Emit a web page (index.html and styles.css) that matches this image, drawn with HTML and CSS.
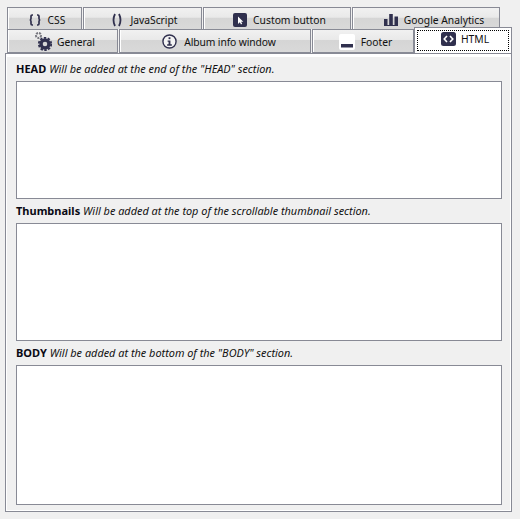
FILE: index.html
```html
<!DOCTYPE html>
<html lang="en">
<head>
    <meta charset="UTF-8">
    <title>Custom code</title>
    <link rel="stylesheet" href="styles.css">
</head>
<body>
    <div class="tabs">
        <div class="tab-row row-top">
            <div class="tab tab-css">
                <svg class="icon" width="12" height="12" viewBox="0 0 12 12"><path d="M4 1H3.200Q2 1 2 2.200V4.500Q2 6 .7 6Q2 6 2 7.500V9.800Q2 11 3.200 11H4M8 1H8.800Q10 1 10 2.200V4.500Q10 6 11.300 6Q10 6 10 7.500V9.800Q10 11 8.800 11H8" fill="none" stroke="#30304e" stroke-width="1.700"/></svg>
                <span>CSS</span>
            </div>
            <div class="tab tab-js">
                <svg class="icon" width="10" height="14" viewBox="0 0 10 14"><path d="M3 1Q0 7 3 13M7 1Q10 7 7 13" fill="none" stroke="#30304e" stroke-width="1.800"/></svg>
                <span>JavaScript</span>
            </div>
            <div class="tab">
                <svg class="icon" width="14" height="14" viewBox="0 0 14 14"><rect width="14" height="14" rx="2" fill="#30304e"/><path d="M5 3.500V11L6.800 9.300L8 11.500L9.200 10.800L8.100 8.700H10.300Z" fill="#fff"/></svg>
                <span>Custom button</span>
            </div>
            <div class="tab tab-analytics">
                <svg class="icon" width="14" height="12" viewBox="0 0 14 12"><path d="M0 5H3.500V11H0ZM5.200 0H8.800V11H5.200ZM10.500 2.500H14V11H10.500Z" fill="#30304e"/><rect y="11" width="14" height="1" fill="#30304e"/></svg>
                <span>Google Analytics</span>
            </div>
        </div>
        <div class="tab-row row-bottom">
            <div class="tab tab-general">
                <svg class="icon" width="17" height="19" viewBox="0 0 17 19"><circle cx="3.500" cy="3.500" r="2.500" fill="none" stroke="#77777f" stroke-width="2" stroke-dasharray="2 1"/><circle cx="10" cy="12" r="4" fill="none" stroke="#30304e" stroke-width="3.400"/><circle cx="10" cy="12" r="6.200" fill="none" stroke="#30304e" stroke-width="1.800" stroke-dasharray="2.400 1.500"/></svg>
                <span>General</span>
            </div>
            <div class="tab tab-album">
                <svg class="icon" width="15" height="15" viewBox="0 0 16 16"><circle cx="8" cy="8" r="7" fill="#f4f4f4" stroke="#30304e" stroke-width="1.500"/><rect x="7" y="3.500" width="2" height="2" fill="#30304e"/><path d="M6 7H9V11H10.500V12.500H5.500V11H7V8.300H6Z" fill="#30304e"/></svg>
                <span>Album info window</span>
            </div>
            <div class="tab">
                <svg class="icon" width="16" height="16" viewBox="0 0 16 16"><rect width="16" height="16" rx="2" fill="#fff"/><rect x="2" y="10" width="12" height="3.500" fill="#30304e"/></svg>
                <span>Footer</span>
            </div>
            <div class="tab tab-active">
                <div class="focus-box">
                    <svg class="icon" width="15" height="14" viewBox="0 0 15 14"><rect width="15" height="14" rx="2.500" fill="#30304e"/><path d="M6 4L3.200 7L6 10M9 4L11.800 7L9 10" fill="none" stroke="#fff" stroke-width="1.600"/></svg>
                    <span>HTML</span>
                </div>
            </div>
        </div>
    </div>

    <div class="panel">
        <div class="field">
            <p class="field-label"><b>HEAD</b> <i>Will be added at the end of the "HEAD" section.</i></p>
            <div class="code-box box-small"></div>
        </div>
        <div class="field">
            <p class="field-label"><b>Thumbnails</b> <i>Will be added at the top of the scrollable thumbnail section.</i></p>
            <div class="code-box box-small"></div>
        </div>
        <div class="field">
            <p class="field-label"><b>BODY</b> <i>Will be added at the bottom of the "BODY" section.</i></p>
            <div class="code-box box-large"></div>
        </div>
    </div>
</body>
</html>
```

FILE: styles.css
```css
body {
    margin: 0;
    background: #f0f0f0;
    font-family: "Noto Sans", "Liberation Sans", sans-serif;
    font-size: 11px;
    color: #111;
}
.tabs {
    padding: 7px 0 0 7px;
}
.tab-row {
    display: grid;
}
.row-top {
    grid-template-columns: 76px 120px 149px 148px;
    width: 493px;
    height: 22px;
}
.row-bottom {
    grid-template-columns: 112px 193px 103px 97px;
    width: 505px;
    height: 24px;
}
.tab {
    display: flex;
    align-items: center;
    justify-content: center;
    gap: 6px;
    box-sizing: border-box;
    padding-left: 5px;
    border: 1px solid #888a95;
    border-bottom: none;
    margin-right: 1px;
    box-shadow: inset 1px 0 #fff;
    background: linear-gradient(#f1f1f1 0, #e9e9e9 45%, #d5d5d5 46%, #d9d9d9 100%);
    font-size: 10.3px;
}
.row-top .tab {
    padding-top: 2px;
}
.row-top .tab:last-child {
    margin-right: 0;
}
.row-bottom .tab {
    padding-top: 1px;
    border-bottom: 1px solid #888a95;
}
.tab-css {
    gap: 7px;
}
.tab-js {
    gap: 8px;
}
.row-top .tab-analytics {
    padding-left: 16px;
}
.tab-general {
    gap: 5px;
}
.tab-album {
    gap: 7px;
    padding-left: 8px;
    letter-spacing: -0.1px;
}
.row-bottom .tab-active {
    margin: -2px 0 0 -1px;
    padding: 2px;
    position: relative;
    background: #fff;
    box-shadow: none;
    border-bottom: none;
    align-items: stretch;
}
.focus-box {
    flex: 1;
    display: flex;
    align-items: center;
    justify-content: center;
    gap: 5px;
    padding: 0 0 3px 4px;
    border: 1px dotted #000;
}
.icon {
    flex: none;
}
.panel {
    margin: 0 8px 0 5px;
    height: 459px;
    box-sizing: border-box;
    padding: 6px 9px 6px 10px;
    border: 1px solid #888a95;
    box-shadow: inset 0 3px #fff, inset 1px 0 #fff, inset -1px 0 #fff, inset 0 -1px #fff;
    display: flex;
    flex-direction: column;
    gap: 3px;
}
.field-label {
    margin: 0 0 3px;
    height: 18px;
    line-height: 18px;
    white-space: nowrap;
}
.field-label b {
    color: #0a0a14;
}
.field-label i {
    font-size: 10.9px;
}
.code-box {
    background: #fff;
    border: 1px solid #888a95;
}
.box-small {
    height: 116px;
}
.box-large {
    height: 138px;
}
```
